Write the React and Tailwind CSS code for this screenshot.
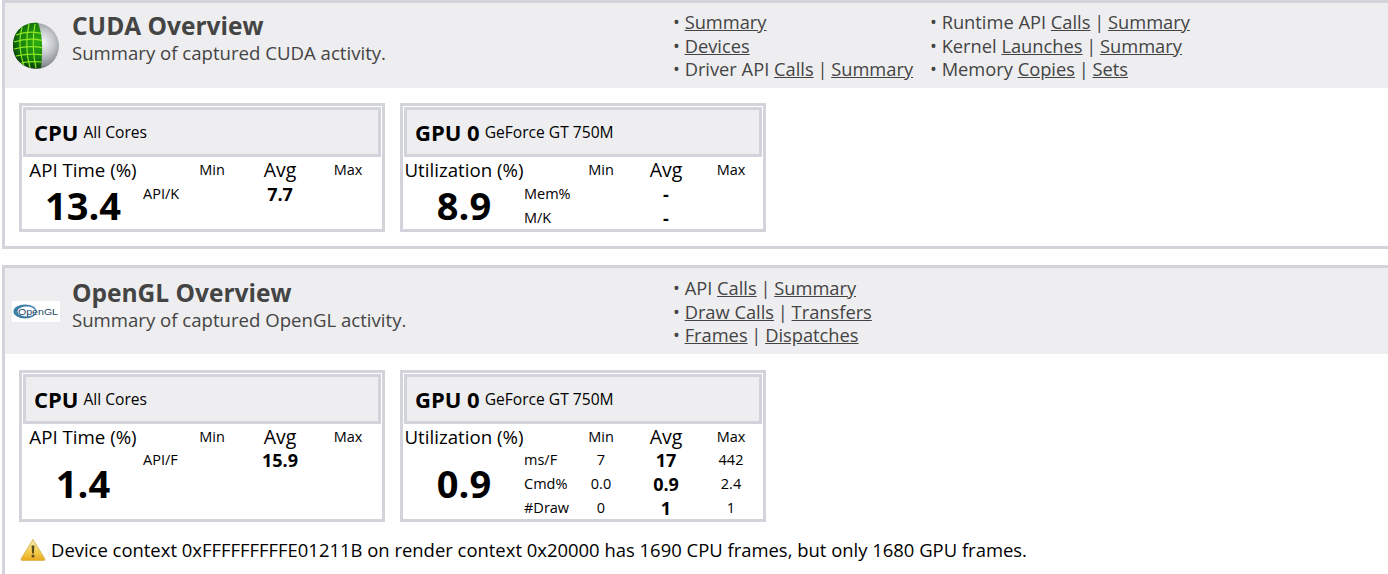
const FONT = "font-['Open_Sans',sans-serif]";

function CudaLogo() {
  return (
    <svg width="50" height="50" viewBox="0 0 50 50" className="shrink-0">
      <defs>
        <radialGradient id="silver" cx="0.62" cy="0.42" r="0.62">
          <stop offset="0" stopColor="#f6f7f8" />
          <stop offset="0.45" stopColor="#c2c6ca" />
          <stop offset="0.8" stopColor="#8a8f95" />
          <stop offset="1" stopColor="#55595d" />
        </radialGradient>
        <radialGradient id="green" cx="0.5" cy="0.42" r="0.6">
          <stop offset="0" stopColor="#2fb014" />
          <stop offset="0.6" stopColor="#137a0b" />
          <stop offset="1" stopColor="#062c05" />
        </radialGradient>
        <clipPath id="greenPart">
          <path d="M26 2 C18 1 1 5 1 25 C1 42 16 49 29 47 C30 36 32 16 26 2Z" />
        </clipPath>
      </defs>
      <circle cx="24" cy="25" r="23" fill="url(#silver)" />
      <g clipPath="url(#greenPart)">
        <rect width="50" height="50" fill="url(#green)" />
        <g stroke="#8ee824" strokeWidth="1.2" fill="none">
          <path d="M4 14 Q18 9 31 13M2 21 Q18 16 32 20M2 28 Q18 24 32 27M4 35 Q18 32 32 34M9 42 Q18 40 30 41" />
          <path d="M10 6 Q5 25 12 45M17 3 Q12 25 18 47M23 3 Q19 25 24 47" />
        </g>
      </g>
    </svg>
  );
}

function OpenGLLogo() {
  return (
    <svg width="48" height="21" viewBox="0 0 48 21" className="shrink-0 bg-white">
      <ellipse cx="13" cy="10.5" rx="11.5" ry="7" fill="#3b7ea8" />
      <ellipse cx="14.5" cy="10.5" rx="9" ry="5" fill="#ffffff" />
      <text x="6" y="13.5" fontSize="9.5" fill="#1f4a66" fontFamily="Liberation Sans, sans-serif" textLength="40" lengthAdjust="spacingAndGlyphs">
        OpenGL
      </text>
    </svg>
  );
}

function WarningIcon() {
  return (
    <svg width="26" height="24" viewBox="0 0 26 24" className="shrink-0">
      <defs>
        <linearGradient id="warn" x1="0" y1="0" x2="0" y2="1">
          <stop offset="0" stopColor="#f7edb8" />
          <stop offset="0.55" stopColor="#f3cd52" />
          <stop offset="1" stopColor="#e9a91c" />
        </linearGradient>
      </defs>
      <path d="M13 1.5 L25 21 Q25.3 22.5 23.5 22.5 L2.5 22.5 Q0.7 22.5 1 21Z" fill="url(#warn)" stroke="#d9b95a" strokeWidth="1" strokeLinejoin="round" />
      <path d="M11.6 7.5 h2.8 l-0.5 8 h-1.8z" fill="#5a4a20" />
      <rect x="11.7" y="16.8" width="2.6" height="2.6" fill="#5a4a20" />
    </svg>
  );
}

function L({ children }) {
  return <a className="underline">{children}</a>;
}

function Sep() {
  return <span className="mx-[-1px]"> | </span>;
}

function Section({ logo, title, subtitle, links, headClass, textClass, linkClass, bodyClass, children }) {
  return (
    <section className="ml-[2px] w-[1400px] border-[3px] border-[#d3d3db] bg-white">
      <div className={`flex bg-[#eeeef0] text-[#444444] ${headClass}`}>
        <div className="flex w-[67px] shrink-0 items-center pl-[7px] pt-[1px]">{logo}</div>
        <div className={`w-[601px] shrink-0 ${textClass}`}>
          <div className="text-[24.5px] leading-[31px] font-bold">{title}</div>
          <div className="text-[18.6px] leading-[23px]">{subtitle}</div>
        </div>
        {links.map((col, i) => (
          <ul key={i} className={`text-[18.3px] leading-[23.6px] whitespace-nowrap ${linkClass} ${i === 0 ? "w-[257px]" : ""}`}>
            {col.map((item, j) => (
              <li key={j}>• {item}</li>
            ))}
          </ul>
        ))}
      </div>
      <div className={bodyClass}>{children}</div>
    </section>
  );
}

function Card({ name, detail, metric, value, cols, rows, heightClass, valueClass, rowClass }) {
  return (
    <div className={`w-[366px] overflow-hidden border-[3px] border-[#d3d3db] p-px ${heightClass}`}>
      <div className="flex h-[50px] items-center gap-[5px] border-[3px] border-[#d3d3db] bg-[#eeeef0] pl-[8px] text-black">
        <span className="text-[22px] font-bold">{name}</span>
        <span className="mt-[2px] text-[15.6px]">{detail}</span>
      </div>
      <div className={`grid ${cols} auto-rows-[24px] items-center text-center text-[14.5px] leading-[1.2] text-black`}>
        <div className="mt-[2px] text-[18.7px] leading-[20px] whitespace-nowrap">{metric}</div>
        <div />
        <div className="mt-[1px]">Min</div>
        <div className="mt-[2px] text-[19.5px] leading-[20px]">Avg</div>
        <div className="mt-[1px]">Max</div>
        <div
          className={`col-start-1 flex items-center justify-center text-[38px] font-bold ${valueClass}`}
          style={{ gridRow: `2 / span ${rows.length}` }}
        >
          {value}
        </div>
        {rows.map((r, i) => (
          <div key={i} className="contents">
            <div className={`text-left ${rowClass}`}>{r.label}</div>
            <div className={rowClass}>{r.min}</div>
            <div className={`text-[18px] leading-[20px] font-bold ${rowClass}`}>{r.avg}</div>
            <div className={rowClass}>{r.max}</div>
          </div>
        ))}
      </div>
    </div>
  );
}

export default function App() {
  const cpuCols = "grid-cols-[120px_35px_68px_68px_68px]";
  const gpuCols = "grid-cols-[120px_44px_66px_64px_66px]";
  return (
    <div className={`h-[574px] w-[1388px] overflow-hidden bg-white ${FONT}`}>
      <Section
        logo={<CudaLogo />}
        title="CUDA Overview"
        subtitle="Summary of captured CUDA activity."
        headClass="h-[85px]"
        textClass="pt-[7px]"
        linkClass="pt-[7px]"
        bodyClass="px-[14px] pt-[15px] pb-[14px]"
        links={[
          [<L>Summary</L>, <L>Devices</L>, <>Driver API <L>Calls</L><Sep /><L>Summary</L></>],
          [<>Runtime API <L>Calls</L><Sep /><L>Summary</L></>, <>Kernel <L>Launches</L><Sep /><L>Summary</L></>, <>Memory <L>Copies</L><Sep /><L>Sets</L></>],
        ]}
      >
        <div className="flex gap-[15px]">
          <Card
            name="CPU"
            detail="All Cores"
            metric="API Time (%)"
            value="13.4"
            cols={cpuCols}
            heightClass="h-[129px]"
            valueClass="pt-[2px]"
            rowClass="pt-[2px]"
            rows={[{ label: "API/K", avg: "7.7" }, {}]}
          />
          <Card
            name="GPU 0"
            detail="GeForce GT 750M"
            metric="Utilization (%)"
            value="8.9"
            cols={gpuCols}
            heightClass="h-[129px]"
            valueClass="pt-[2px]"
            rowClass="pt-[2px]"
            rows={[{ label: "Mem%", avg: "-" }, { label: "M/K", avg: "-" }]}
          />
        </div>
      </Section>
      <div className="h-[16px]" />
      <Section
        logo={<OpenGLLogo />}
        title="OpenGL Overview"
        subtitle="Summary of captured OpenGL activity."
        headClass="h-[86px]"
        textClass="pt-[9px]"
        linkClass="pt-[8px]"
        bodyClass="px-[14px] pt-[16px] pb-[14px]"
        links={[
          [<>API <L>Calls</L><Sep /><L>Summary</L></>, <><L>Draw Calls</L><Sep /><L>Transfers</L></>, <><L>Frames</L><Sep /><L>Dispatches</L></>],
        ]}
      >
        <div className="flex gap-[15px]">
          <Card
            name="CPU"
            detail="All Cores"
            metric="API Time (%)"
            value="1.4"
            cols={cpuCols}
            heightClass="h-[152px]"
            rows={[{ label: "API/F", avg: "15.9" }, {}, {}]}
          />
          <Card
            name="GPU 0"
            detail="GeForce GT 750M"
            metric="Utilization (%)"
            value="0.9"
            cols={gpuCols}
            heightClass="h-[152px]"
            rows={[
              { label: "ms/F", min: "7", avg: "17", max: "442" },
              { label: "Cmd%", min: "0.0", avg: "0.9", max: "2.4" },
              { label: "#Draw", min: "0", avg: "1", max: "1" },
            ]}
          />
        </div>
        <div className="mt-[14px] ml-px flex items-center gap-[5px] text-[18.46px] text-black whitespace-nowrap">
          <WarningIcon />
          <span>Device context 0xFFFFFFFFFE01211B on render context 0x20000 has 1690 CPU frames, but only 1680 GPU frames.</span>
        </div>
      </Section>
    </div>
  );
}
